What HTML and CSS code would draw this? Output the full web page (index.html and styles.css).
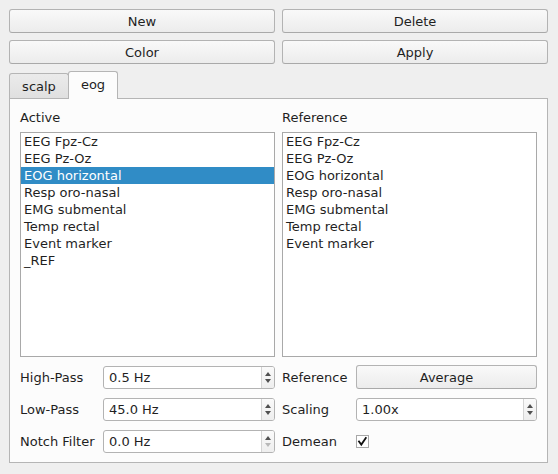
FILE: index.html
```html
<!DOCTYPE html>
<html>
<head>
<meta charset="utf-8">
<link rel="stylesheet" href="styles.css">
</head>
<body>
<div class="win">
  <div class="btn-grid">
    <div class="btn">New</div>
    <div class="btn">Delete</div>
    <div class="btn">Color</div>
    <div class="btn">Apply</div>
  </div>
  <div class="tabbar">
    <div class="tab">scalp</div>
    <div class="tab sel">eog</div>
  </div>
  <div class="pane">
    <div class="cols">
      <div class="col">
        <div class="label">Active</div>
        <div class="list">
          <div class="item">EEG Fpz-Cz</div>
          <div class="item">EEG Pz-Oz</div>
          <div class="item cur">EOG horizontal</div>
          <div class="item">Resp oro-nasal</div>
          <div class="item">EMG submental</div>
          <div class="item">Temp rectal</div>
          <div class="item">Event marker</div>
          <div class="item">_REF</div>
        </div>
      </div>
      <div class="col">
        <div class="label">Reference</div>
        <div class="list">
          <div class="item">EEG Fpz-Cz</div>
          <div class="item">EEG Pz-Oz</div>
          <div class="item">EOG horizontal</div>
          <div class="item">Resp oro-nasal</div>
          <div class="item">EMG submental</div>
          <div class="item">Temp rectal</div>
          <div class="item">Event marker</div>
        </div>
      </div>
    </div>
    <div class="cols forms">
      <div class="form form-left">
        <div class="flabel">High-Pass</div>
        <div class="spin"><span class="val">0.5 Hz</span><span class="arrows"><span class="up"></span><span class="down"></span></span></div>
        <div class="flabel">Low-Pass</div>
        <div class="spin"><span class="val">45.0 Hz</span><span class="arrows"><span class="up"></span><span class="down"></span></span></div>
        <div class="flabel">Notch Filter</div>
        <div class="spin"><span class="val">0.0 Hz</span><span class="arrows"><span class="up"></span><span class="down off"></span></span></div>
      </div>
      <div class="form form-right">
        <div class="flabel">Reference</div>
        <div class="btn small">Average</div>
        <div class="flabel">Scaling</div>
        <div class="spin"><span class="val">1.00x</span><span class="arrows"><span class="up"></span><span class="down"></span></span></div>
        <div class="flabel">Demean</div>
        <div class="checkcell">
          <span class="check"><svg width="11" height="11" viewBox="0 0 11 11"><path d="M2 5.5 L4.3 8.6 L8.8 2" fill="none" stroke="#111" stroke-width="1.8" stroke-linecap="square" stroke-linejoin="miter"/></svg></span>
        </div>
      </div>
    </div>
  </div>
</div>
</body>
</html>
```
FILE: styles.css
```css
html, body {
  margin: 0;
  padding: 0;
  background: #efefef;
}
body {
  font-family: "DejaVu Sans", sans-serif;
  font-size: 13px;
  color: #1f1f1f;
  width: 558px;
  height: 474px;
  overflow: hidden;
}
.win {
  padding: 9px 10px 0 9px;
}
.btn-grid {
  display: grid;
  grid-template-columns: 1fr 1fr;
  column-gap: 7px;
  row-gap: 7px;
}
.btn {
  box-sizing: border-box;
  height: 24px;
  border: 1px solid #b3b3b3;
  border-bottom-color: #a9a9a9;
  border-radius: 3px;
  background: linear-gradient(#f9f9f9, #ececec);
  display: flex;
  align-items: center;
  justify-content: center;
  line-height: 17px;
}
.tabbar {
  margin-top: 7px;
  height: 27px;
  display: flex;
  align-items: flex-end;
  position: relative;
  z-index: 1;
}
.tab {
  box-sizing: border-box;
  width: 60px;
  height: 25px;
  border: 1px solid #b5b5b5;
  border-bottom: none;
  border-radius: 3px 3px 0 0;
  background: linear-gradient(#ebebeb, #e0e0e0);
  display: flex;
  align-items: center;
  justify-content: center;
  padding-top: 1px;
}
.tab.sel {
  width: 50px;
  height: 28px;
  margin-left: -1px;
  margin-bottom: -1px;
  background: #fcfcfc;
  padding-top: 0;
  padding-bottom: 2px;
}
.pane {
  box-sizing: border-box;
  border: 1px solid #b5b5b5;
  background: #fcfcfc;
  padding: 10px 10px 9px 10px;
}
.cols {
  display: grid;
  grid-template-columns: 1fr 1fr;
  column-gap: 7px;
}
.label {
  line-height: 17px;
  height: 17px;
  margin-bottom: 6px;
}
.list {
  box-sizing: border-box;
  height: 225px;
  border: 1px solid #a9a9a9;
  background: #ffffff;
}
.item {
  height: 17px;
  line-height: 17px;
  padding-left: 3px;
  white-space: nowrap;
}
.item.cur {
  background: #308cc6;
  color: #ffffff;
}
.forms {
  margin-top: 8px;
}
.form {
  display: grid;
  grid-template-rows: 24px 24px 24px;
  row-gap: 8px;
  align-items: center;
}
.form-left {
  grid-template-columns: 83px 1fr;
}
.form-right {
  grid-template-columns: 74px 1fr;
}
.flabel {
  line-height: 17px;
  white-space: nowrap;
}
.spin {
  box-sizing: border-box;
  height: 23px;
  border: 1px solid #b3b3b3;
  border-radius: 3px;
  background: #ffffff;
  display: flex;
  align-items: stretch;
}
.val {
  flex: 1;
  display: flex;
  align-items: center;
  padding-left: 5px;
}
.arrows {
  width: 12px;
  border-left: 1px solid #d4d4d4;
  background: linear-gradient(#fafafa, #eeeeee);
  border-radius: 0 2px 2px 0;
  display: flex;
  flex-direction: column;
  align-items: center;
  justify-content: center;
  gap: 3px;
}
.up, .down {
  width: 0;
  height: 0;
  border-left: 3.5px solid transparent;
  border-right: 3.5px solid transparent;
}
.up {
  border-bottom: 4px solid #505050;
}
.down {
  border-top: 4px solid #505050;
}
.down.off {
  border-top-color: #b8b8b8;
}
.btn.small {
  height: 24px;
}
.checkcell {
  display: flex;
  align-items: center;
}
.check {
  box-sizing: border-box;
  width: 13px;
  height: 13px;
  border: 1px solid #a8a8a8;
  background: #ffffff;
  display: flex;
  align-items: center;
  justify-content: center;
}
.check svg {
  display: block;
}
```
